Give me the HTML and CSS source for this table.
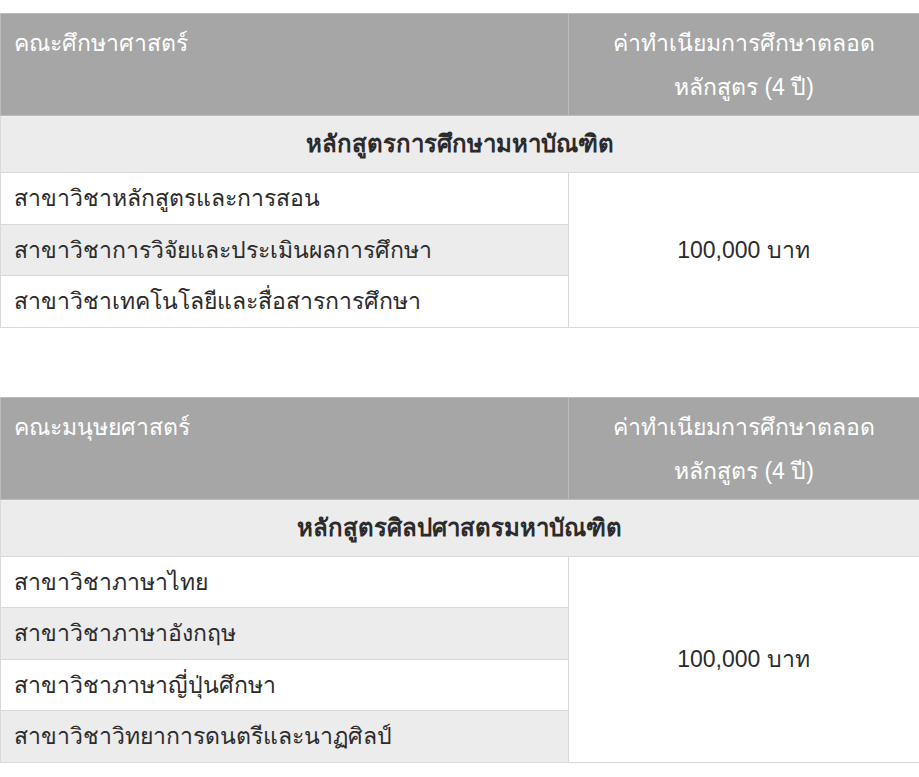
FILE: index.html
```html
<!DOCTYPE html>
<html lang="th">
<head>
<meta charset="utf-8">
<link rel="stylesheet" href="styles.css">
</head>
<body>
<table class="fee">
  <colgroup><col class="c-name"><col class="c-fee"></colgroup>
  <thead>
    <tr><th class="h-left">คณะศึกษาศาสตร์</th><th class="h-right">ค่าทำเนียมการศึกษาตลอดหลักสูตร (4 ปี)</th></tr>
  </thead>
  <tbody>
    <tr class="sub"><td colspan="2">หลักสูตรการศึกษามหาบัณฑิต</td></tr>
    <tr><td>สาขาวิชาหลักสูตรและการสอน</td><td class="price" rowspan="3">100,000 บาท</td></tr>
    <tr class="alt"><td>สาขาวิชาการวิจัยและประเมินผลการศึกษา</td></tr>
    <tr><td>สาขาวิชาเทคโนโลยีและสื่อสารการศึกษา</td></tr>
  </tbody>
</table>

<table class="fee">
  <colgroup><col class="c-name"><col class="c-fee"></colgroup>
  <thead>
    <tr><th class="h-left">คณะมนุษยศาสตร์</th><th class="h-right">ค่าทำเนียมการศึกษาตลอดหลักสูตร (4 ปี)</th></tr>
  </thead>
  <tbody>
    <tr class="sub"><td colspan="2">หลักสูตรศิลปศาสตรมหาบัณฑิต</td></tr>
    <tr><td>สาขาวิชาภาษาไทย</td><td class="price" rowspan="4">100,000 บาท</td></tr>
    <tr class="alt"><td>สาขาวิชาภาษาอังกฤษ</td></tr>
    <tr><td>สาขาวิชาภาษาญี่ปุ่นศึกษา</td></tr>
    <tr class="alt"><td>สาขาวิชาวิทยาการดนตรีและนาฏศิลป์</td></tr>
  </tbody>
</table>
</body>
</html>
```
FILE: styles.css
```css
html, body { margin: 0; padding: 0; background: #fff; }
body {
  padding-top: 13px;
  font-family: "Liberation Sans", sans-serif;
  font-size: 23px;
  color: #2b2b2b;
}
.fee {
  width: 919px;
  border-collapse: collapse;
  table-layout: fixed;
  margin-bottom: 69px;
}
.c-name { width: 568px; }
.c-fee { width: 351px; }
.fee th, .fee td {
  border: 1px solid #d9d9d9;
  padding: 8px 14px 8px 13px;
  line-height: 34.5px;
  font-weight: normal;
}
.fee thead th {
  background: #a6a6a6;
  color: #fff;
  border-color: #bcbcbc;
  padding-top: 7px;
  padding-bottom: 6px;
  line-height: 44px;
  vertical-align: top;
}
.h-left { text-align: left; }
.fee th.h-right { text-align: center; padding-left: 14px; }
.sub td {
  background: #ececec;
  text-align: center;
  font-weight: bold;
  font-size: 24px;
  line-height: 40px;
  padding-top: 8px;
  padding-bottom: 8px;
}
.alt td { background: #ececec; }
.fee td.price { background: #fff; text-align: center; vertical-align: middle; }
```
